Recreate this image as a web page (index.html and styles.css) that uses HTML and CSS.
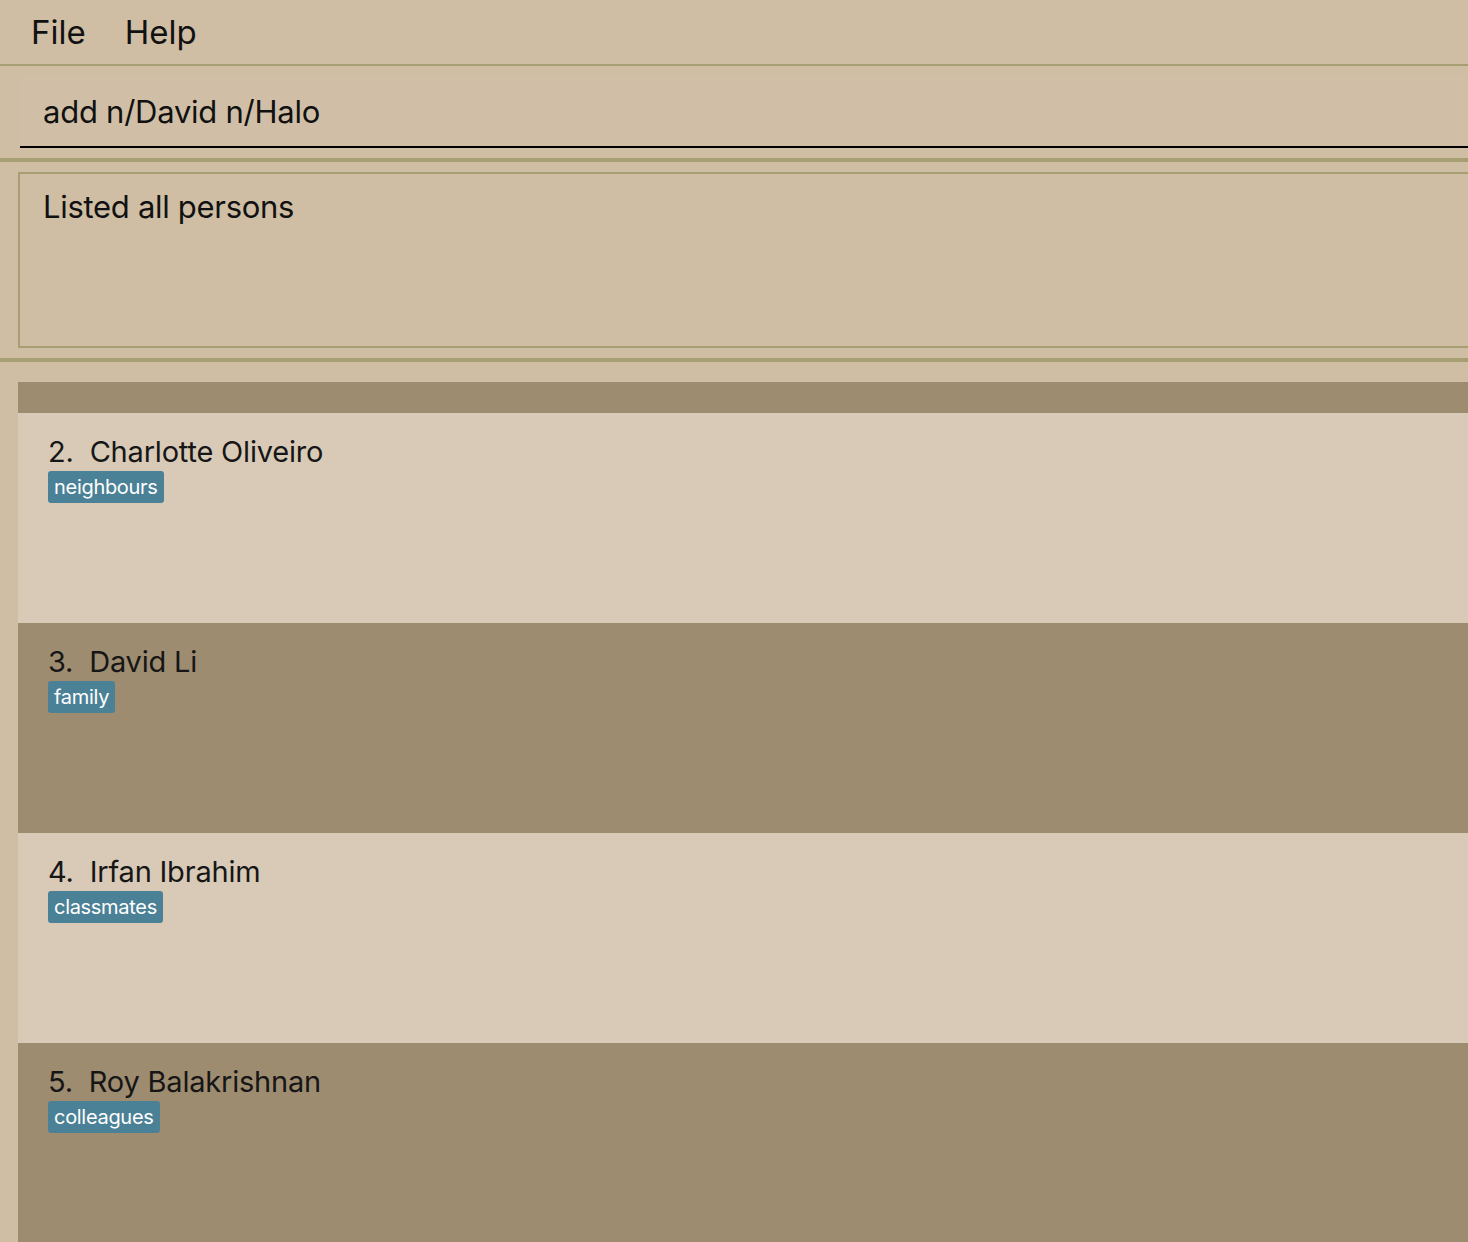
FILE: index.html
```html
<!DOCTYPE html>
<html>
<head>
<meta charset="utf-8">
<link rel="stylesheet" href="styles.css">
</head>
<body>
<div class="menubar">
  <span class="menu-item">File</span>
  <span class="menu-item">Help</span>
</div>
<div class="command-section">
  <div class="command-box">add n/David n/Halo</div>
</div>
<div class="result-section">
  <div class="result-box">Listed all persons</div>
</div>
<div class="list-section">
  <div class="list">
    <div class="list-top"></div>
    <div class="card light">
      <div class="name"><span class="idx">2.</span><span>Charlotte Oliveiro</span></div>
      <div class="tags"><span class="tag">neighbours</span></div>
    </div>
    <div class="card dark">
      <div class="name"><span class="idx">3.</span><span>David Li</span></div>
      <div class="tags"><span class="tag">family</span></div>
    </div>
    <div class="card light">
      <div class="name"><span class="idx">4.</span><span>Irfan Ibrahim</span></div>
      <div class="tags"><span class="tag">classmates</span></div>
    </div>
    <div class="card dark">
      <div class="name"><span class="idx">5.</span><span>Roy Balakrishnan</span></div>
      <div class="tags"><span class="tag">colleagues</span></div>
    </div>
  </div>
</div>
</body>
</html>
```
FILE: styles.css
```css
html, body {
  margin: 0;
  padding: 0;
  background: #cfbea4;
  font-family: Inter, "Open Sans", sans-serif;
  color: #111;
  overflow: hidden;
  height: 1242px;
}
.menubar {
  height: 64px;
  border-bottom: 2px solid #a89e74;
  display: flex;
  align-items: center;
  padding-left: 31px;
  gap: 39px;
}
.menu-item {
  font-size: 33px;
  line-height: 1;
  margin-top: 0px;
}
.command-section {
  padding: 10px 0 10px 20px;
  border-bottom: 4px solid #a89e74;
}
.command-box {
  height: 72px;
  border-bottom: 2px solid #000;
  background: #d0bfa6;
  box-sizing: border-box;
  padding-left: 23px;
  display: flex;
  align-items: center;
  font-size: 31px;
  letter-spacing: -0.25px;
}
.result-section {
  padding: 10px 0 10px 18px;
  border-bottom: 4px solid #a89e74;
}
.result-box {
  height: 176px;
  box-sizing: border-box;
  border: 2px solid #a89e74;
  border-right: none;
  padding: 14px 0 0 23px;
  font-size: 31px;
  letter-spacing: -0.3px;
}
.list-section {
  padding: 20px 0 0 18px;
}
.list-top {
  height: 31px;
  background: #9e8c70;
}
.card {
  height: 210px;
  box-sizing: border-box;
  padding: 21px 0 0 30px;
}
.card.light { background: #d8cab6; }
.card.dark { background: #9e8c70; }
.name {
  font-size: 29px;
  line-height: 36px;
  letter-spacing: -0.2px;
  color: #161616;
}
.idx {
  margin-right: 16px;
}
.tags {
  margin-top: 1px;
  display: flex;
}
.tag {
  background: #4b8196;
  color: #fff;
  font-size: 20px;
  line-height: 32px;
  height: 32px;
  padding: 0 6px;
  border-radius: 3px;
  letter-spacing: -0.3px;
}
```
